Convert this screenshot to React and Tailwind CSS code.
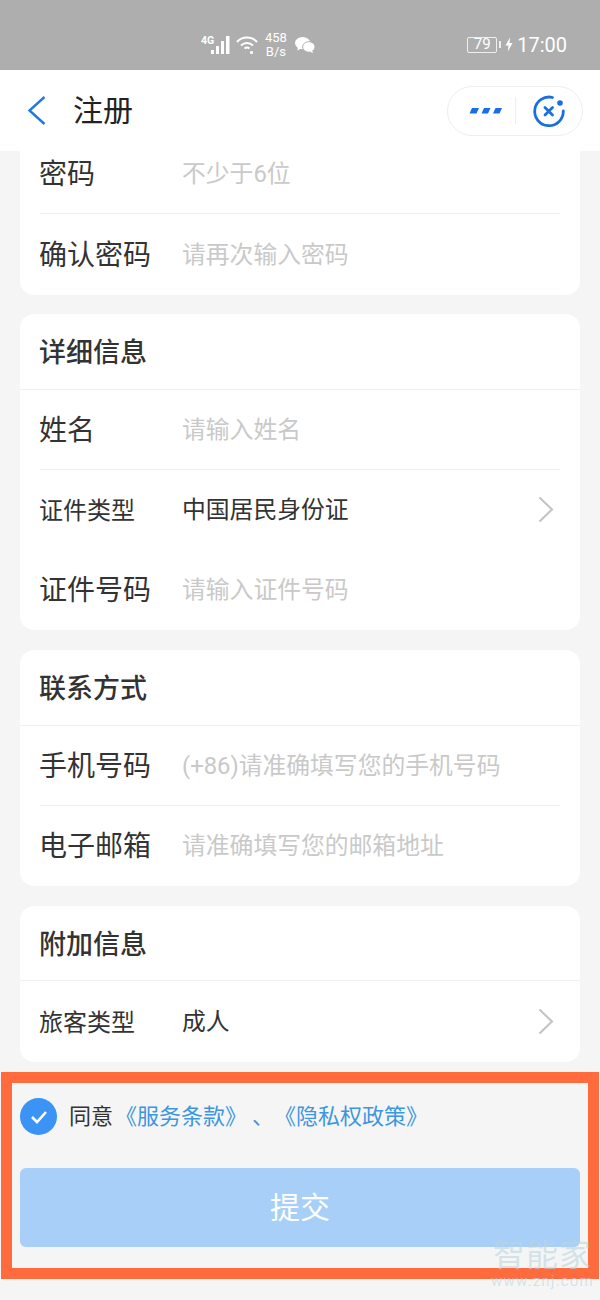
const Arrow = () => (
  <svg className="ml-auto mr-[6px] -mt-[3px]" width="16" height="27" viewBox="0 0 16 27" fill="none" stroke="#c2c2c2" strokeWidth="2">
    <path d="M1.5 1.5 L14 13.5 L1.5 25.5" />
  </svg>
);

const Row = ({ label, small, value, placeholder, arrow, divider, height = "h-[80px]" }) => (
  <div className={`flex items-center mx-5 pt-[2px] ${height} ${divider ? "border-b border-[#efefef]" : ""}`}>
    <span className={`-ml-px w-[143px] shrink-0 text-[#333] ${small ? "text-[24px]" : "text-[28px]"}`}>{label}</span>
    {value && <span className="text-[23.8px] text-[#333]">{value}</span>}
    {placeholder && <span className="text-[23.8px] text-[#c9c9c9]">{placeholder}</span>}
    {arrow && <Arrow />}
  </div>
);

const Card = ({ title, titleHeight = "h-[76px]", gap = "mb-5", children }) => (
  <div className={`bg-white rounded-[14px] mx-5 overflow-hidden ${gap}`}>
    {title && (
      <div className={`${titleHeight} flex items-center pl-[19px] pr-5 pt-[4px] border-b border-[#efefef] text-[27px] font-medium text-[#333]`}>
        {title}
      </div>
    )}
    {children}
  </div>
);

const StatusBar = () => (
  <div className="h-[70px] bg-[#aeaeae] flex items-center text-white">
    <div className="flex items-center pl-[201px] pt-[19px]">
      <svg width="30" height="20" viewBox="0 0 30 20" fill="white">
        <text x="0" y="9" fontSize="10.5" fontWeight="700" fontFamily="Roboto">4G</text>
        <rect x="10" y="15" width="3" height="4" />
        <rect x="15" y="11" width="3" height="8" />
        <rect x="20" y="6" width="3" height="13" />
        <rect x="25" y="1" width="3.5" height="18" />
      </svg>
      <svg className="ml-[4px]" width="24" height="20" viewBox="0 0 24 20" fill="none" stroke="white" strokeWidth="2">
        <path d="M2 7 C7 1 17 1 22 7" />
        <path d="M6 10.5 C9.5 7 14.5 7 18 10.5" />
        <path d="M9.5 13.5 C11 12.3 13 12.3 14.5 13.5" />
        <path d="M10 17.5 h0.1 M15 17.5 h3" strokeWidth="2.5" />
      </svg>
      <div className="ml-[6px] flex flex-col items-center text-[13px] leading-[14px]">
        <span>458</span>
        <span>B/s</span>
      </div>
      <svg className="ml-[8px]" width="21" height="18" viewBox="0 0 22 18" fill="white">
        <ellipse cx="8" cy="7" rx="8" ry="6.5" />
        <path d="M3 11 L2.5 15 L7 12 Z" />
        <ellipse cx="14.5" cy="11" rx="6.5" ry="5.5" stroke="#aeaeae" strokeWidth="1" />
        <path d="M18 15 L19 17.5 L15.5 16 Z" />
      </svg>
    </div>
    <div className="ml-auto flex items-center pr-[33px] pt-[19px]">
      <div className="w-[30px] h-[16px] border border-white/80 rounded-[2px] flex items-center justify-center text-[15px] leading-none">
        79
      </div>
      <div className="w-[2px] h-[7px] ml-[2px] bg-white/80" />
      <svg className="ml-[4px]" width="8" height="15" viewBox="0 0 8 14" fill="white">
        <path d="M5 0 L0.5 8 H3.5 L2.8 14 L7.5 5.5 H4.5 Z" />
      </svg>
      <span className="ml-[4px] text-[20px] leading-none">17:00</span>
    </div>
  </div>
);

const Header = () => (
  <div className="h-[81px] bg-white flex items-center">
    <svg className="ml-[27px]" width="20" height="32" viewBox="0 0 20 32" fill="none" stroke="#1f7ae0" strokeWidth="2.4">
      <path d="M17.5 2 L2.5 15.5 L17.5 29" />
    </svg>
    <span className="ml-[26px] text-[30px] text-[#222]">注册</span>
    <div className="ml-auto mr-[17px] w-[136px] h-[50px] rounded-full border border-[#eeeeee] flex items-center">
      <svg className="ml-[21px]" width="33" height="8" viewBox="0 0 33 8" fill="#1a6fe0">
        <path d="M3 1 H10 L7.5 6.5 H0.5 Z" />
        <path d="M15 1 H21.5 L19 6.5 H12.5 Z" />
        <path d="M26.5 1 H33 L30.5 6.5 H24 Z" />
      </svg>
      <div className="ml-[13px] w-px h-[27px] bg-[#eeeeee]" />
      <svg className="ml-[16px]" width="34" height="34" viewBox="0 0 34 34" fill="none" stroke="#1a6fe0" strokeWidth="2.8">
        <path d="M20.5 3.5 A14.3 14.3 0 1 0 31.3 17" strokeLinecap="round" />
        <path d="M13 13.5 L20.5 21 M20.5 13.5 L13 21" strokeLinecap="round" />
        <circle cx="28" cy="9" r="2.8" fill="#1a6fe0" stroke="none" />
      </svg>
    </div>
  </div>
);

const App = () => {
  return (
    <div className="relative w-[600px] h-[1300px] overflow-hidden bg-[#f5f5f5] font-['Roboto','Noto_Sans_CJK_SC',sans-serif]">
      <StatusBar />
      <Header />

      <div className="h-[921px] overflow-hidden">
        <div className="-mt-[17px]">
          <Card gap="mb-[19px]">
            <Row label="密码" placeholder="不少于6位" divider />
            <Row label="确认密码" placeholder="请再次输入密码" height="h-[81px]" />
          </Card>
          <Card title="详细信息">
            <Row label="姓名" placeholder="请输入姓名" divider />
            <Row label="证件类型" small value="中国居民身份证" arrow />
            <Row label="证件号码" placeholder="请输入证件号码" />
          </Card>
          <Card title="联系方式">
            <Row label="手机号码" placeholder="(+86)请准确填写您的手机号码" divider />
            <Row label="电子邮箱" placeholder="请准确填写您的邮箱地址" />
          </Card>
          <Card title="附加信息" titleHeight="h-[75px]">
            <Row label="旅客类型" small value="成人" arrow height="h-[81px]" />
          </Card>
        </div>
      </div>

      {/* Orange marked area */}
      <div className="mx-px h-[207px] border-[11px] border-[#ff6b3d] flex flex-col">
        <div className="flex items-center pl-2 pt-[15px]">
          <div className="w-[37px] h-[37px] rounded-full bg-[#3a93f5] flex items-center justify-center">
            <svg width="20" height="16" viewBox="0 0 20 16" fill="none" stroke="white" strokeWidth="2.6">
              <path d="M3 8 L8 13 L17 3" />
            </svg>
          </div>
          <span className="ml-[12px] text-[22px] text-[#333]">同意</span>
          <span className="ml-[2px] text-[22px] text-[#3d96e0] [text-spacing-trim:space-all]">
            《服务条款》<span className="ml-[5px]">、</span><span>《隐私权政策》</span>
          </span>
        </div>
        <div className="mx-2 mt-[33px] h-[79px] rounded-[6px] bg-[#a8cff7] flex items-center justify-center text-[30px] text-white">
          提交
        </div>
      </div>

      {/* Watermark */}
      <div className="absolute left-[491px] top-[1237px] flex flex-col items-center text-[#bcd5df]/60">
        <span className="text-[32px] leading-[36px] tracking-[1px]">智能家</span>
        <span className="text-[15px] leading-[16px] tracking-[1.2px]">www.znj.com</span>
      </div>
    </div>
  );
};

export default App;
